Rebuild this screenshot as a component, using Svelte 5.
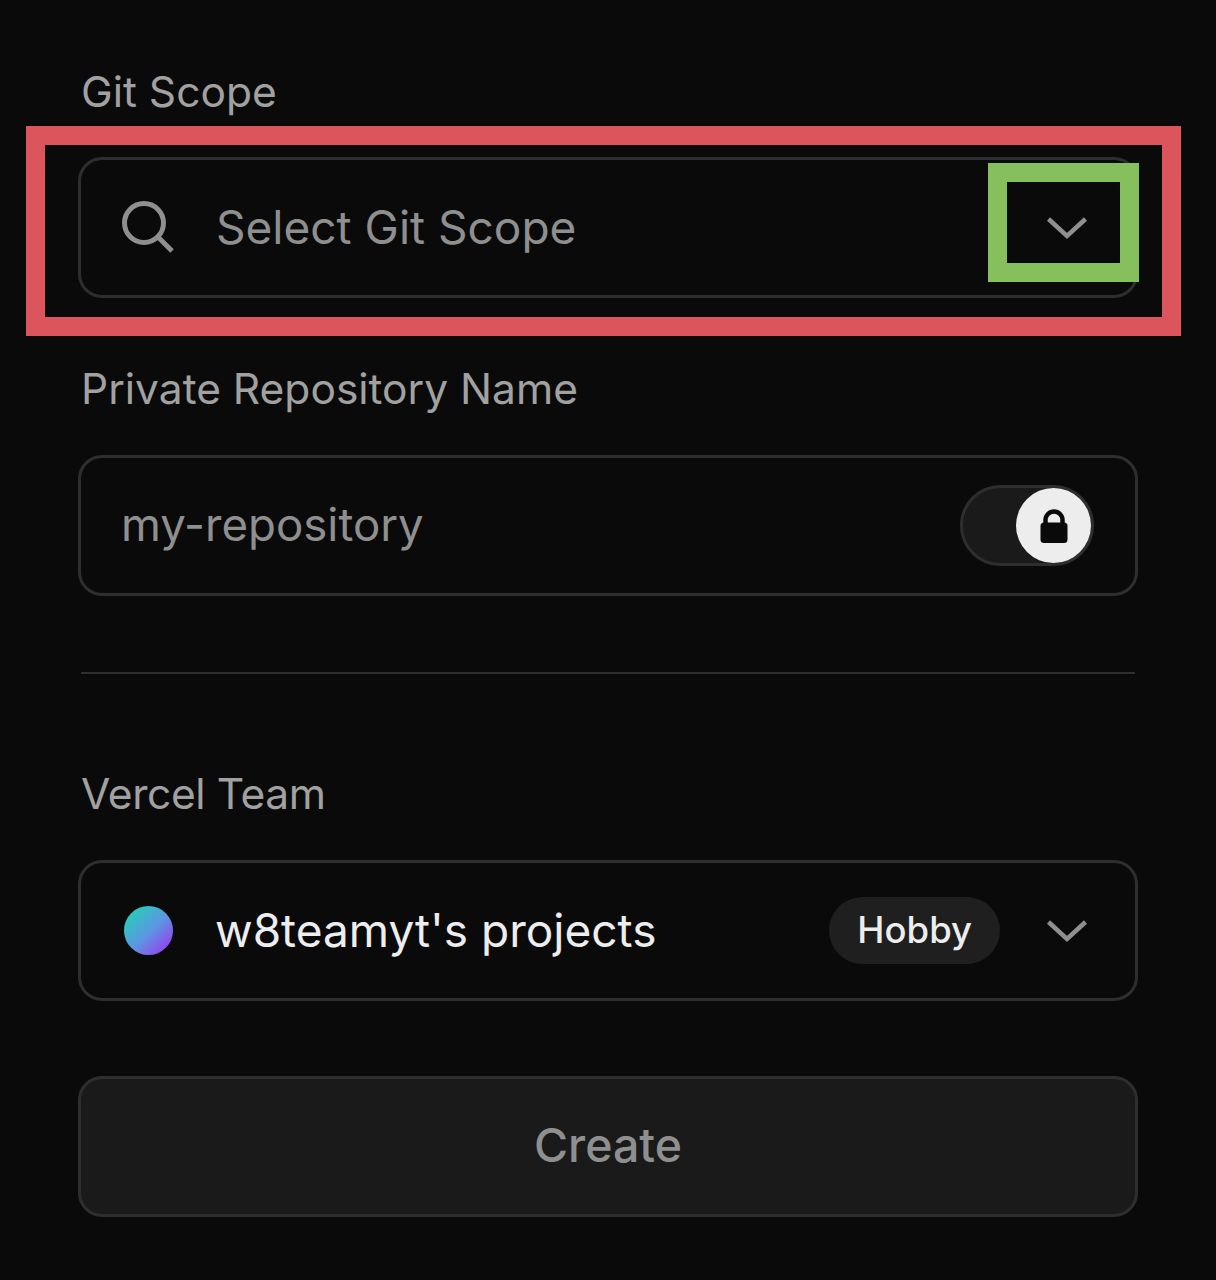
<script>
	let repoName = 'my-repository';
</script>

<main class="page">
	<div class="label first">Git Scope</div>
	<div class="field">
		<svg class="search" width="56" height="56" viewBox="0 0 56 56" fill="none">
			<circle cx="23" cy="24" r="19.5" stroke="#8f8f8f" stroke-width="5" />
			<path d="M37 38 L51 52" stroke="#8f8f8f" stroke-width="5" />
		</svg>
		<span class="placeholder">Select Git Scope</span>
		<svg class="chevron" width="42" height="24" viewBox="0 0 42 24" fill="none">
			<path d="M2.5 3 L21 20 L39.5 3" stroke="#8f8f8f" stroke-width="4.5" />
		</svg>
		<div class="mark red"></div>
		<div class="mark green"></div>
	</div>

	<div class="label">Private Repository Name</div>
	<div class="field">
		<span class="repo">{repoName}</span>
		<div class="toggle">
			<div class="knob">
				<svg width="30" height="36" viewBox="0 0 30 36" fill="none">
					<path d="M6.5 16 V12 a8.5 8.5 0 0 1 17 0 V16" stroke="#0a0a0a" stroke-width="4.5" />
					<rect x="1.5" y="14.5" width="27" height="20.5" rx="3.5" fill="#0a0a0a" />
				</svg>
			</div>
		</div>
	</div>

	<hr />

	<div class="label team-label">Vercel Team</div>
	<div class="field">
		<div class="avatar"></div>
		<span class="team">w8teamyt's projects</span>
		<span class="badge">Hobby</span>
		<svg class="chevron" width="42" height="24" viewBox="0 0 42 24" fill="none">
			<path d="M2.5 3 L21 20 L39.5 3" stroke="#8f8f8f" stroke-width="4.5" />
		</svg>
	</div>

	<button type="button">Create</button>
</main>

<style>
	:global(body) {
		margin: 0;
		background: #0a0a0a;
	}

	.page {
		box-sizing: border-box;
		width: 1216px;
		height: 1280px;
		padding: 0 78px;
		background: #0a0a0a;
		font-family: Inter, "Liberation Sans", sans-serif;
		overflow: hidden;
	}

	.label {
		margin: 66px 0 41px 3px;
		font-size: 42.5px;
		line-height: 50px;
		color: #a1a1a1;
	}

	.label.first {
		margin-top: 67px;
		margin-bottom: 40px;
	}

	.team-label {
		letter-spacing: -0.4px;
	}

	.field {
		position: relative;
		box-sizing: border-box;
		display: flex;
		align-items: center;
		height: 141px;
		padding: 0 47px 0 40px;
		border: 3px solid #2e2e2e;
		border-radius: 24px;
	}

	.search {
		flex: none;
		margin: -2px 39px 0 0;
	}

	.placeholder {
		padding-bottom: 2px;
		font-size: 46px;
		color: #8f8f8f;
	}

	.repo {
		padding-bottom: 2px;
		font-size: 45.6px;
		color: #8f8f8f;
	}

	.chevron {
		flex: none;
		margin-left: auto;
	}

	.toggle {
		box-sizing: border-box;
		display: flex;
		align-items: center;
		justify-content: flex-end;
		width: 134px;
		height: 81px;
		margin-left: auto;
		margin-right: -6px;
		border: 3px solid #2e2e2e;
		border-radius: 41px;
		background: #1a1a1a;
	}

	.knob {
		display: flex;
		align-items: center;
		justify-content: center;
		width: 75px;
		height: 75px;
		border-radius: 50%;
		background: #ededed;
	}

	.avatar {
		flex: none;
		width: 49px;
		height: 49px;
		margin: 0 42px 0 3px;
		border-radius: 50%;
		background: linear-gradient(135deg, #17dcb0 0%, #5b98e0 52%, #a828f4 100%);
	}

	.team {
		padding-bottom: 2px;
		font-size: 46px;
		color: #ededed;
	}

	.badge {
		margin-left: auto;
		padding: 0 28px;
		height: 67px;
		line-height: 67px;
		border-radius: 34px;
		background: #1f1f1f;
		font-size: 36.5px;
		font-weight: 500;
		color: #ededed;
	}

	.badge + .chevron {
		margin-left: 46px;
	}

	hr {
		height: 2px;
		margin: 76px 3px 0;
		border: none;
		background: #2e2e2e;
	}

	hr + .label {
		margin-top: 95px;
	}

	button {
		display: block;
		box-sizing: border-box;
		width: 100%;
		height: 141px;
		margin-top: 75px;
		padding-bottom: 4px;
		border: 3px solid #2e2e2e;
		border-radius: 24px;
		background: #1a1a1a;
		font-family: inherit;
		font-size: 46.5px;
		font-weight: 500;
		color: #8f8f8f;
	}

	/* annotation boxes drawn over the first field */
	.mark {
		position: absolute;
		box-sizing: border-box;
		border-style: solid;
		border-width: 19px;
	}

	.red {
		left: -55px;
		top: -34px;
		width: 1155px;
		height: 210px;
		border-color: #dc545c;
	}

	.green {
		left: 907px;
		top: 3px;
		width: 151px;
		height: 119px;
		border-color: #85c05d;
	}
</style>
